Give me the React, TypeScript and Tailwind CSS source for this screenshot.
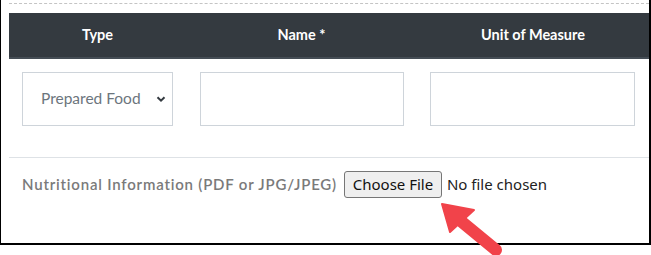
import React from "react";

export default function App() {
  return (
    <div className="relative w-[651px] h-[255px] bg-white overflow-hidden" style={{ fontFamily: "Lato, 'Noto Sans', sans-serif" }}>
      <div className="w-[651px] h-[245px] border-l-[1.5px] border-r-2 border-b-2 border-black pl-[8px] pt-[3px]">
        <div className="border-t border-dashed border-[#c4c4c4] h-[10px]" />
        <div className="grid grid-cols-[177px_231px_1fr] bg-[#343a40] border-b-2 border-[#454d55] h-[46px] items-center text-white font-bold text-[14.5px]">
          <div className="text-center">Type</div>
          <div className="text-center">Name *</div>
          <div className="text-center">Unit of Measure</div>
        </div>
        <div className="grid grid-cols-[177px_231px_1fr] pt-[13px] pb-[31px] border-b border-[#dee2e6]">
          <div className="pl-[13px] pr-[13px]">
            <div className="h-[54px] border border-[#ced4da] flex items-center pl-[18px] pr-[6px] text-[#6c757d] text-[15.5px]">
              <span className="flex-1">Prepared Food</span>
              <svg width="10" height="10" viewBox="0 0 10 10">
                <path d="M1.5 3.2 L5 6.7 L8.5 3.2" fill="none" stroke="#343a40" strokeWidth="2" />
              </svg>
            </div>
          </div>
          <div className="pl-[14px] pr-[13px]">
            <div className="h-[54px] border border-[#ced4da]" />
          </div>
          <div className="pl-[13px] pr-[14px]">
            <div className="h-[54px] border border-[#ced4da]" />
          </div>
        </div>
        <div className="flex items-center pl-[13px] pt-[13px]">
          <span className="text-[#7a7a7a] text-[15px] font-semibold tracking-[0.8px]">Nutritional Information (PDF or JPG/JPEG)</span>
          <div className="flex items-center ml-[7px]" style={{ fontFamily: "'Noto Sans', sans-serif" }}>
            <div className="h-[27px] w-[98px] border border-[#767676] rounded-[3px] bg-[#efefef] flex items-center justify-center text-[15px] text-[#111]">Choose File</div>
            <span className="ml-[5px] text-[15px] text-[#222]">No file chosen</span>
          </div>
        </div>
      </div>
      <svg className="absolute left-0 top-0" width="651" height="255" viewBox="0 0 651 255">
        <line x1="462" y1="222" x2="496" y2="250" stroke="#f1434a" strokeWidth="12" strokeLinecap="round" />
        <polygon points="442,204 474,210 450,232" fill="#f1434a" stroke="#f1434a" strokeWidth="2" strokeLinejoin="round" />
      </svg>
    </div>
  );
}
